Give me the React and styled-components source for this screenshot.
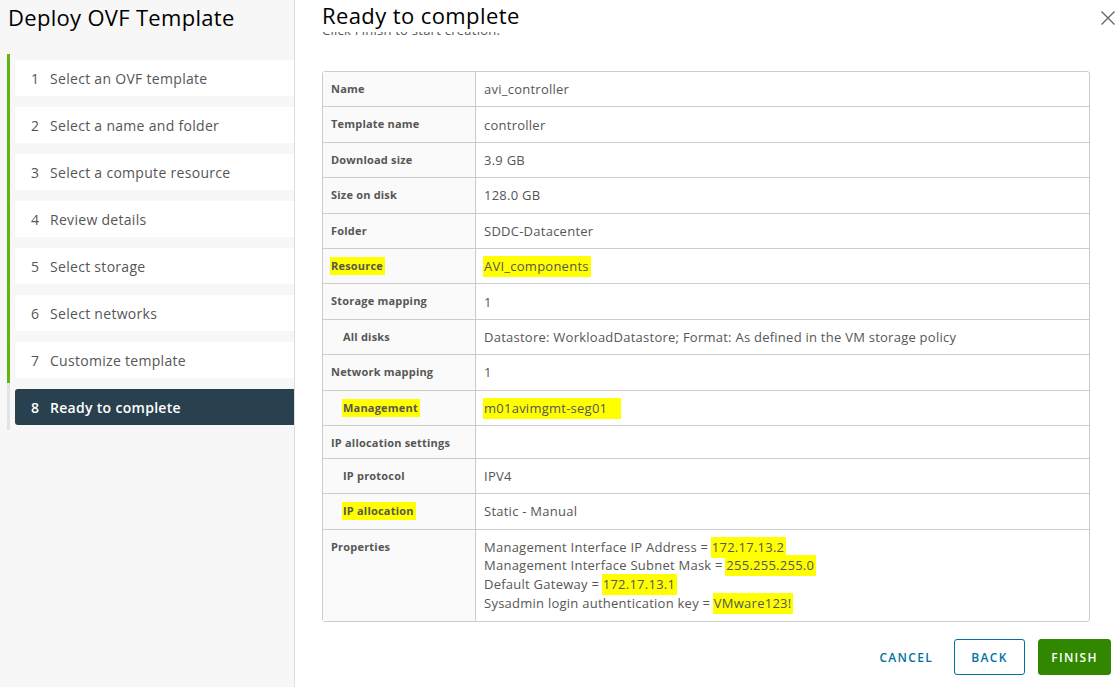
import React from 'react';
import styled, { createGlobalStyle } from 'styled-components';

const Global = createGlobalStyle`
    html, body {
        margin: 0;
        padding: 0;
        background: #ffffff;
        font-family: 'Open Sans', 'Noto Sans', sans-serif;
        color: #565656;
    }
    * { box-sizing: border-box; }
`;

const Page = styled.div`
    display: flex;
    width: 1117px;
    height: 687px;
    overflow: hidden;
`;
const Sidebar = styled.div`
    width: 295px;
    flex: none;
    background: #f7f7f7;
    border-right: 1px solid #dddddd;
    padding: 2px 0 0 7px;
`;
const SideTitle = styled.div`
    font-size: 22px;
    color: #000000;
    line-height: 30px;
    padding-left: 1px;
    letter-spacing: 0.3px;
    margin-bottom: 22px;
`;
const StepList = styled.div`
    display: flex;
    flex-direction: column;
`;
const StepItem = styled.div`
    border-left: 3px solid ${({ $done }) => ($done ? '#60b515' : '#e3e3e3')};
    padding: 6px 0 5px 5px;
`;
const Step = styled.div`
    height: 36px;
    display: flex;
    align-items: center;
    padding-left: 16px;
    border-radius: 3px 0 0 3px;
    font-size: 14px;
    letter-spacing: 0.3px;
    background: ${({ $active }) => ($active ? '#29414e' : '#ffffff')};
    color: ${({ $active }) => ($active ? '#ffffff' : '#565656')};
    font-weight: ${({ $active }) => ($active ? 600 : 400)};
`;
const StepNum = styled.span`
    width: 19px;
`;
const Main = styled.div`
    flex: 1;
    display: flex;
    flex-direction: column;
    padding: 0 26px 0 27px;
    position: relative;
`;
const Header = styled.div`
    display: flex;
    align-items: flex-start;
    height: 32px;
`;
const Title = styled.div`
    font-size: 22px;
    color: #000000;
    line-height: 30px;
    letter-spacing: 0.4px;
`;
const CloseBtn = styled.svg`
    position: absolute;
    right: 1px;
    top: 10px;
    width: 16px;
    height: 16px;
`;
const Scroll = styled.div`
    height: 598px;
    overflow: hidden;
    display: flex;
    flex-direction: column;
`;
const Intro = styled.div`
    font-size: 13px;
    line-height: 18px;
    margin-top: -11px;
    margin-bottom: 32px;
    letter-spacing: 0.25px;
`;
const Table = styled.table`
    width: 768px;
    border-collapse: separate;
    border-spacing: 0;
    border: 1px solid #cccccc;
    border-radius: 3px;
    td {
        border-bottom: 1px solid #cccccc;
    }
    tr:last-child td {
        border-bottom: none;
    }
`;
const Row = styled.tr`
    height: ${({ $short, $tall }) => ($tall ? '91px' : $short ? '33px' : '35.4px')};
`;
const Label = styled.td`
    width: 153px;
    background: #fafafa;
    border-right: 1px solid #cccccc;
    font-size: 11px;
    font-weight: 700;
    color: #565656;
    vertical-align: top;
    letter-spacing: 0.2px;
    padding: 10px 0 0 ${({ $sub }) => ($sub ? '20px' : '8px')};
    line-height: 14px;
`;
const Value = styled.td`
    font-size: 13px;
    color: #565656;
    letter-spacing: 0.25px;
    vertical-align: ${({ $top }) => ($top ? 'top' : 'middle')};
    padding: ${({ $top }) => ($top ? '8px 0 0 8px' : '0 0 0 8px')};
`;
const PropLine = styled.div`
    line-height: 18.7px;
`;
const Mark = styled.span`
    background: #ffff00;
    padding: 1px ${({ $wide }) => ($wide ? '14px' : '2px')} 2px 1px;
    margin-left: -1px;
`;
const Footer = styled.div`
    display: flex;
    justify-content: flex-end;
    align-items: center;
    gap: 13px;
    height: 57px;
    padding-bottom: 3px;
    margin-right: -20px;
`;
const BtnBase = styled.button`
    font-family: 'Open Sans', 'Noto Sans', sans-serif;
    font-size: 12px;
    font-weight: 600;
    letter-spacing: 1.3px;
    height: 36px;
    border-radius: 3px;
    cursor: pointer;
`;
const LinkBtn = styled(BtnBase)`
    background: none;
    border: none;
    color: #0072a3;
    padding: 0 8px;
`;
const OutlineBtn = styled(BtnBase)`
    background: #ffffff;
    border: 1px solid #0072a3;
    color: #0072a3;
    width: 71px;
`;
const PrimaryBtn = styled(BtnBase)`
    background: #318700;
    border: 1px solid #318700;
    color: #ffffff;
    width: 73px;
`;

const steps = [
    'Select an OVF template',
    'Select a name and folder',
    'Select a compute resource',
    'Review details',
    'Select storage',
    'Select networks',
    'Customize template',
    'Ready to complete',
];

const mark = (t) => <Mark>{t}</Mark>;

const rows = [
    { label: 'Name', value: 'avi_controller' },
    { label: 'Template name', value: 'controller' },
    { label: 'Download size', value: '3.9 GB' },
    { label: 'Size on disk', value: '128.0 GB' },
    { label: 'Folder', value: 'SDDC-Datacenter' },
    { label: mark('Resource'), value: mark('AVI_components') },
    { label: 'Storage mapping', value: '1' },
    { label: 'All disks', value: 'Datastore: WorkloadDatastore; Format: As defined in the VM storage policy', sub: true },
    { label: 'Network mapping', value: '1' },
    { label: mark('Management'), value: <Mark $wide>m01avimgmt-seg01</Mark>, sub: true },
    { label: 'IP allocation settings', value: '', short: true },
    { label: 'IP protocol', value: 'IPV4', sub: true },
    { label: mark('IP allocation'), value: 'Static - Manual', sub: true },
];

const props = [
    ['Management Interface IP Address = ', '172.17.13.2'],
    ['Management Interface Subnet Mask = ', '255.255.255.0'],
    ['Default Gateway = ', '172.17.13.1'],
    ['Sysadmin login authentication key = ', 'VMware123!'],
];

const App = () => {
    return (
        <>
            <Global />
            <Page>
                <Sidebar>
                    <SideTitle>Deploy OVF Template</SideTitle>
                    <StepList>
                        {steps.map((s, i) => (
                            <StepItem key={s} $done={i < 7}>
                                <Step $active={i === 7}>
                                    <StepNum>{i + 1}</StepNum>
                                    {s}
                                </Step>
                            </StepItem>
                        ))}
                    </StepList>
                </Sidebar>
                <Main>
                    <Header>
                        <Title>Ready to complete</Title>
                        <CloseBtn viewBox="0 0 16 16">
                            <path d="M1.5 1.5 L14.5 14.5 M14.5 1.5 L1.5 14.5" stroke="#666666" strokeWidth="1.4" fill="none" />
                        </CloseBtn>
                    </Header>
                    <Scroll>
                        <Intro>Click Finish to start creation.</Intro>
                        <Table>
                            <tbody>
                                {rows.map((r, i) => (
                                    <Row key={i} $short={r.short}>
                                        <Label $sub={r.sub}>{r.label}</Label>
                                        <Value>{r.value}</Value>
                                    </Row>
                                ))}
                                <Row $tall>
                                    <Label>Properties</Label>
                                    <Value $top>
                                        {props.map(([a, b]) => (
                                            <PropLine key={a}>
                                                {a}
                                                {mark(b)}
                                            </PropLine>
                                        ))}
                                    </Value>
                                </Row>
                            </tbody>
                        </Table>
                    </Scroll>
                    <Footer>
                        <LinkBtn>CANCEL</LinkBtn>
                        <OutlineBtn>BACK</OutlineBtn>
                        <PrimaryBtn>FINISH</PrimaryBtn>
                    </Footer>
                </Main>
            </Page>
        </>
    );
};

export default App;
